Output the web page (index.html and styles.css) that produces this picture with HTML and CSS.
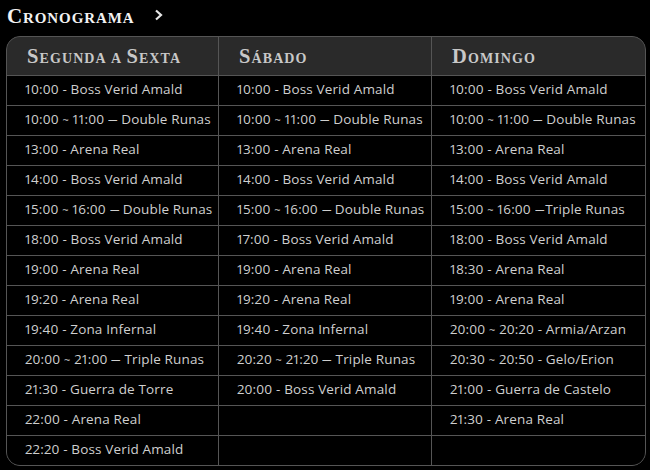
FILE: index.html
```html
<!DOCTYPE html>
<html>
<head>
<meta charset="utf-8">
<link rel="stylesheet" href="styles.css">
</head>
<body>
<div class="page">
  <h1 class="title">Cronograma
    <svg class="chev" width="10" height="12" viewBox="0 0 10 12"><polyline points="2,1.5 7,6 2,10.5" fill="none" stroke="#e6e6e6" stroke-width="2.2"/></svg>
  </h1>
  <div class="sched">
    <div class="hd">Segunda a Sexta</div>
    <div class="hd">Sábado</div>
    <div class="hd">Domingo</div>

    <div class="c">10:00 - Boss Verid Amald</div>
    <div class="c">10:00 - Boss Verid Amald</div>
    <div class="c">10:00 - Boss Verid Amald</div>

    <div class="c">10:00 <span class="t">~</span> 11:00 <span class="d">—</span> Double Runas</div>
    <div class="c">10:00 <span class="t">~</span> 11:00 <span class="d">—</span> Double Runas</div>
    <div class="c">10:00 <span class="t">~</span> 11:00 <span class="d">—</span> Double Runas</div>

    <div class="c">13:00 - Arena Real</div>
    <div class="c">13:00 - Arena Real</div>
    <div class="c">13:00 - Arena Real</div>

    <div class="c">14:00 - Boss Verid Amald</div>
    <div class="c">14:00 - Boss Verid Amald</div>
    <div class="c">14:00 - Boss Verid Amald</div>

    <div class="c">15:00 <span class="t">~</span> 16:00 <span class="d">—</span> Double Runas</div>
    <div class="c">15:00 <span class="t">~</span> 16:00 <span class="d">—</span> Double Runas</div>
    <div class="c">15:00 <span class="t">~</span> 16:00 <span class="d d2">—</span>Triple Runas</div>

    <div class="c">18:00 - Boss Verid Amald</div>
    <div class="c">17:00 - Boss Verid Amald</div>
    <div class="c">18:00 - Boss Verid Amald</div>

    <div class="c">19:00 - Arena Real</div>
    <div class="c">19:00 - Arena Real</div>
    <div class="c">18:30 - Arena Real</div>

    <div class="c">19:20 - Arena Real</div>
    <div class="c">19:20 - Arena Real</div>
    <div class="c">19:00 - Arena Real</div>

    <div class="c">19:40 - Zona Infernal</div>
    <div class="c">19:40 - Zona Infernal</div>
    <div class="c">20:00 <span class="t">~</span> 20:20 - Armia/Arzan</div>

    <div class="c">20:00 <span class="t">~</span> 21:00 <span class="d">—</span> Triple Runas</div>
    <div class="c">20:20 <span class="t">~</span> 21:20 <span class="d">—</span> Triple Runas</div>
    <div class="c">20:30 <span class="t">~</span> 20:50 - Gelo/Erion</div>

    <div class="c">21:30 - Guerra de Torre</div>
    <div class="c">20:00 - Boss Verid Amald</div>
    <div class="c">21:00 - Guerra de Castelo</div>

    <div class="c">22:00 - Arena Real</div>
    <div class="c"></div>
    <div class="c">21:30 - Arena Real</div>

    <div class="c">22:20 - Boss Verid Amald</div>
    <div class="c"></div>
    <div class="c"></div>
  </div>
</div>
</body>
</html>
```

FILE: styles.css
```css
html, body {
  margin: 0;
  padding: 0;
  background: #000;
}
.page {
  padding: 4px 4px 0 6px;
}
.title {
  margin: 0 0 8px 1px;
  height: 24px;
  display: flex;
  align-items: center;
  gap: 19px;
  font-family: "Liberation Serif", serif;
  font-variant: small-caps;
  font-weight: bold;
  font-size: 21px;
  color: #f2f2f2;
  letter-spacing: 0.9px;
}
.chev {
  margin-top: -2px;
}
.sched {
  width: 638px;
  display: grid;
  grid-template-columns: 211px 212px 213px;
  grid-template-rows: 38px repeat(13, 29px);
  gap: 1px;
  background: #555;
  border: 1px solid #555;
  border-radius: 14px;
  overflow: hidden;
}
.hd {
  background: #2a2a2a;
  color: #c8c8c8;
  font-family: "Liberation Serif", serif;
  font-variant: small-caps;
  font-weight: bold;
  font-size: 20.5px;
  letter-spacing: 1.1px;
  word-spacing: -2px;
  padding-left: 20px;
  display: flex;
  align-items: center;
}
.c {
  background: #000;
  color: #cfcfcf;
  font-family: "Open Sans", sans-serif;
  font-variant-numeric: proportional-nums;
  font-size: 13.5px;
  letter-spacing: 0.15px;
  padding-left: 18px;
  padding-bottom: 3px;
  display: flex;
  align-items: center;
  white-space: pre;
}
.t {
  font-size: 11px;
  vertical-align: 1px;
}
.d {
  display: inline-block;
  transform: scaleX(0.7);
  margin: 0 -2px;
}
.d2 {
  margin-right: -1px;
}
```
